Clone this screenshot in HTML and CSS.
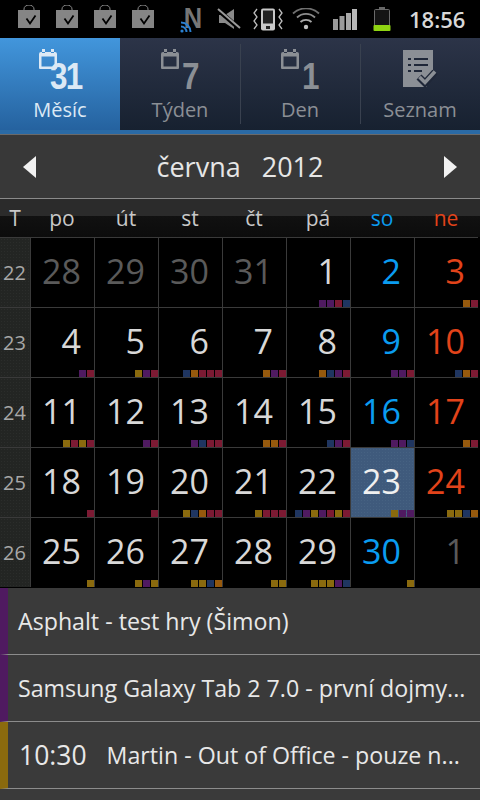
FILE: index.html
```html
<!DOCTYPE html>
<html lang="cs">
<head>
<meta charset="utf-8">
<title>Kalendář</title>
<link rel="stylesheet" href="styles.css">
</head>
<body>
<div class="app">
  <header class="status">
    <svg class="bag" viewBox="0 0 22 23"><path d="M6 6V4a5 4 0 0 1 10 0v2" fill="none" stroke="#8a8a8a" stroke-width="1"/><rect y="5" width="22" height="18" fill="#858585"/><path d="M8.500 13.500l3.500 5 5.500-8" fill="none" stroke="#000" stroke-width="1.800"/></svg>
    <svg class="bag" viewBox="0 0 22 23"><path d="M6 6V4a5 4 0 0 1 10 0v2" fill="none" stroke="#8a8a8a" stroke-width="1"/><rect y="5" width="22" height="18" fill="#858585"/><path d="M8.500 13.500l3.500 5 5.500-8" fill="none" stroke="#000" stroke-width="1.800"/></svg>
    <svg class="bag" viewBox="0 0 22 23"><path d="M6 6V4a5 4 0 0 1 10 0v2" fill="none" stroke="#8a8a8a" stroke-width="1"/><rect y="5" width="22" height="18" fill="#858585"/><path d="M8.500 13.500l3.500 5 5.500-8" fill="none" stroke="#000" stroke-width="1.800"/></svg>
    <svg class="bag" viewBox="0 0 22 23"><path d="M6 6V4a5 4 0 0 1 10 0v2" fill="none" stroke="#8a8a8a" stroke-width="1"/><rect y="5" width="22" height="18" fill="#858585"/><path d="M8.500 13.500l3.500 5 5.500-8" fill="none" stroke="#000" stroke-width="1.800"/></svg>
    <div class="nfc">
      <span class="nfc-letter">N</span>
      <svg class="nfc-waves" viewBox="0 0 12 12"><circle cx="2" cy="10" r="1.600" fill="#2a7fd0"/><path d="M1 5.500a5.500 5.500 0 0 1 5.500 5.500M1 1.500a9.500 9.500 0 0 1 9.500 9.500" fill="none" stroke="#2a7fd0" stroke-width="2"/></svg>
    </div>
    <svg class="mute" viewBox="0 0 24 24"><path d="M2 8h6l9-6v20l-9-6H2z" fill="#8a8a8a"/><path d="M1 3l22 19" stroke="#000" stroke-width="4.500"/><path d="M1 2l22 19" stroke="#9a9a9a" stroke-width="2"/></svg>
    <svg class="vibrate" viewBox="0 0 30 23"><rect x="8" y="0.500" width="14" height="22" rx="2" fill="#c8c8c8"/><rect x="10" y="2.500" width="10" height="13" fill="#222"/><rect x="13" y="18" width="4" height="3" fill="#222"/><path d="M4 1L1 5l3 4-3 4 3 4-3 4M26 1l3 4-3 4 3 4-3 4 3 4" fill="none" stroke="#bdbdbd" stroke-width="1.300"/></svg>
    <svg class="wifi" viewBox="0 0 28 22"><circle cx="14" cy="19" r="2.200" fill="#c0c0c0"/><path d="M8.500 14a8 8 0 0 1 11 0" fill="none" stroke="#a8a8a8" stroke-width="1.800"/><path d="M5 9.500a13 13 0 0 1 18 0" fill="none" stroke="#8c8c8c" stroke-width="1.800"/><path d="M1 5.500a19 19 0 0 1 26 0" fill="none" stroke="#707070" stroke-width="1.800"/></svg>
    <svg class="signal" viewBox="0 0 24 21"><path d="M0 10h5v11H0z" fill="#9a9a9a"/><path d="M6.500 7h5v14h-5z" fill="#9a9a9a"/><path d="M13 4h5v17h-5z" fill="#a8a8a8"/><path d="M19 0h5v21h-5z" fill="#b8b8b8"/></svg>
    <svg class="battery" viewBox="0 0 18 24"><rect x="6" y="0" width="6" height="2.500" fill="#666"/><rect x="1.500" y="2.500" width="15" height="20" rx="1" fill="#141414" stroke="#6a6a6a"/><rect x="0.500" y="18" width="17" height="6" rx="1" fill="#8fd412"/></svg>
    <span class="clock">18:56</span>
  </header>

  <nav class="tabs">
    <div class="tab tab-active">
      <div class="tab-icon">
        <svg class="cal" viewBox="0 0 18 20"><path d="M2 3h14a2 2 0 0 1 2 2v14a1 1 0 0 1-1 1H1a1 1 0 0 1-1-1V5a2 2 0 0 1 2-2zM2.500 7.500v10h13v-10zM3 0h3v4H3zM12 0h3v4h-3z" fill="currentColor" fill-rule="evenodd"/></svg>
        <span class="tab-num tab-num-month">31</span>
      </div>
      <span class="tab-label">Měsíc</span>
    </div>
    <div class="tab">
      <div class="tab-icon">
        <svg class="cal" viewBox="0 0 18 20"><path d="M2 3h14a2 2 0 0 1 2 2v14a1 1 0 0 1-1 1H1a1 1 0 0 1-1-1V5a2 2 0 0 1 2-2zM2.500 7.500v10h13v-10zM3 0h3v4H3zM12 0h3v4h-3z" fill="currentColor" fill-rule="evenodd"/></svg>
        <span class="tab-num">7</span>
      </div>
      <span class="tab-label">Týden</span>
    </div>
    <div class="tab tab-rule">
      <div class="tab-icon">
        <svg class="cal" viewBox="0 0 18 20"><path d="M2 3h14a2 2 0 0 1 2 2v14a1 1 0 0 1-1 1H1a1 1 0 0 1-1-1V5a2 2 0 0 1 2-2zM2.500 7.500v10h13v-10zM3 0h3v4H3zM12 0h3v4h-3z" fill="currentColor" fill-rule="evenodd"/></svg>
        <span class="tab-num">1</span>
      </div>
      <span class="tab-label">Den</span>
    </div>
    <div class="tab tab-rule">
      <div class="tab-icon">
        <svg class="doc" viewBox="0 0 36 38"><path d="M1 0h30v22l-10 8 4 7H1z" fill="currentColor"/><path d="M6 8h3v2H6zM12 8h14v2H12zM6 14h3v2H6zM12 14h14v2H12zM6 20h3v2H6zM12 20h8v2h-8z" fill="#1f2738"/><path d="M17 27l6 6 10-11" fill="none" stroke="#1f2738" stroke-width="7"/><path d="M17.500 27l5.500 5.500 10-11" fill="none" stroke="currentColor" stroke-width="3.600"/></svg>
      </div>
      <span class="tab-label">Seznam</span>
    </div>
  </nav>

  <section class="month-bar">
    <span class="arrow arrow-left"></span>
    <span class="month-title"><span>června</span><span>2012</span></span>
    <span class="arrow arrow-right"></span>
  </section>

  <div class="weekdays">
    <span class="wd-t">T</span>
    <span>po</span><span>út</span><span>st</span><span>čt</span><span>pá</span>
    <span class="sat">so</span><span class="sun">ne</span>
  </div>

  <main class="grid">
    <div class="wk">22</div>
    <div class="day dim"><b>28</b><i class="marks"></i></div>
    <div class="day dim"><b>29</b><i class="marks"></i></div>
    <div class="day dim"><b>30</b><i class="marks"></i></div>
    <div class="day dim"><b>31</b><i class="marks"></i></div>
    <div class="day"><b>1</b><i class="marks"><u class="p"></u><u class="p"></u><u class="m"></u><u class="n"></u></i></div>
    <div class="day sat"><b>2</b><i class="marks"></i></div>
    <div class="day sun"><b>3</b><i class="marks"><u class="o"></u><u class="m"></u></i></div>

    <div class="wk">23</div>
    <div class="day"><b>4</b><i class="marks"><u class="p"></u><u class="m"></u></i></div>
    <div class="day"><b>5</b><i class="marks"><u class="g"></u><u class="p"></u><u class="m"></u></i></div>
    <div class="day"><b>6</b><i class="marks"><u class="n"></u><u class="o"></u><u class="m"></u><u class="m"></u><u class="m"></u></i></div>
    <div class="day"><b>7</b><i class="marks"><u class="o"></u><u class="p"></u><u class="m"></u></i></div>
    <div class="day"><b>8</b><i class="marks"><u class="o"></u><u class="n"></u><u class="p"></u><u class="m"></u></i></div>
    <div class="day sat"><b>9</b><i class="marks"><u class="p"></u><u class="p"></u><u class="m"></u></i></div>
    <div class="day sun"><b>10</b><i class="marks"><u class="n"></u><u class="o"></u><u class="m"></u></i></div>

    <div class="wk">24</div>
    <div class="day"><b>11</b><i class="marks"><u class="g"></u><u class="m"></u><u class="g"></u><u class="m"></u></i></div>
    <div class="day"><b>12</b><i class="marks"><u class="p"></u><u class="m"></u></i></div>
    <div class="day"><b>13</b><i class="marks"><u class="p"></u><u class="n"></u><u class="m"></u><u class="m"></u></i></div>
    <div class="day"><b>14</b><i class="marks"><u class="o"></u><u class="o"></u><u class="m"></u></i></div>
    <div class="day"><b>15</b><i class="marks"><u class="n"></u><u class="p"></u><u class="m"></u></i></div>
    <div class="day sat"><b>16</b><i class="marks"><u class="p"></u><u class="p"></u><u class="n"></u></i></div>
    <div class="day sun"><b>17</b><i class="marks"><u class="o"></u><u class="m"></u></i></div>

    <div class="wk">25</div>
    <div class="day"><b>18</b><i class="marks"><u class="m"></u></i></div>
    <div class="day"><b>19</b><i class="marks"><u class="m"></u></i></div>
    <div class="day"><b>20</b><i class="marks"><u class="g"></u><u class="n"></u><u class="o"></u><u class="m"></u><u class="m"></u></i></div>
    <div class="day"><b>21</b><i class="marks"><u class="g"></u><u class="m"></u><u class="m"></u><u class="m"></u></i></div>
    <div class="day"><b>22</b><i class="marks"><u class="n"></u><u class="p"></u><u class="g"></u><u class="p"></u><u class="m"></u><u class="g"></u><u class="m"></u></i></div>
    <div class="day today"><b>23</b><i class="marks"><u class="g"></u><u class="p"></u><u class="p"></u></i></div>
    <div class="day sun"><b>24</b><i class="marks"><u class="g"></u><u class="g"></u><u class="n"></u><u class="o"></u></i></div>

    <div class="wk">26</div>
    <div class="day"><b>25</b><i class="marks"><u class="g"></u></i></div>
    <div class="day"><b>26</b><i class="marks"><u class="g"></u><u class="p"></u><u class="g"></u></i></div>
    <div class="day"><b>27</b><i class="marks"><u class="g"></u><u class="g"></u><u class="n"></u><u class="o"></u></i></div>
    <div class="day"><b>28</b><i class="marks"><u class="g"></u><u class="g"></u></i></div>
    <div class="day"><b>29</b><i class="marks"><u class="g"></u><u class="g"></u><u class="g"></u><u class="p"></u><u class="n"></u></i></div>
    <div class="day sat"><b>30</b><i class="marks"><u class="g"></u></i></div>
    <div class="day dim"><b>1</b><i class="marks"></i></div>
  </main>

  <ul class="events">
    <li class="event ev-purple"><span class="ev-title">Asphalt - test hry (Šimon)</span></li>
    <li class="event ev-purple"><span class="ev-title">Samsung Galaxy Tab 2 7.0 - první dojmy...</span></li>
    <li class="event ev-gold"><span class="ev-time">10:30</span><span class="ev-title">Martin - Out of Office - pouze n...</span></li>
  </ul>
</div>
</body>
</html>
```

FILE: styles.css
```css
* { box-sizing: border-box; }
html, body { margin: 0; padding: 0; background: #3a3a3a; }
.app {
  width: 480px;
  height: 800px;
  overflow: hidden;
  display: flex;
  flex-direction: column;
  font-family: "Open Sans", "Noto Sans", sans-serif;
  color: #dcdcdc;
}

/* status bar */
.status {
  height: 38px;
  flex: none;
  background: #000;
  display: flex;
  align-items: flex-start;
  padding-left: 18px;
}
.status svg { display: block; flex: none; }
.bag { width: 22px; height: 23px; margin: 5px 16px 0 0; }
.nfc { position: relative; width: 24px; height: 32px; margin-left: 10px; }
.nfc-letter {
  position: absolute;
  left: 2px;
  top: 0;
  font: bold 30px/36px "Liberation Sans", sans-serif;
  color: #767676;
  transform: scaleX(0.85);
}
.nfc-waves { position: absolute; left: 0; top: 21px; width: 12px; height: 12px; }
.mute { width: 24px; height: 24px; margin: 7px 0 0 13px; }
.vibrate { width: 30px; height: 23px; margin: 8px 0 0 12px; }
.wifi { width: 28px; height: 22px; margin: 8px 0 0 9px; }
.signal { width: 24px; height: 21px; margin: 9px 0 0 13px; }
.battery { width: 18px; height: 24px; margin: 7px 0 0 16px; }
.clock {
  margin-left: 18px;
  font-size: 22px;
  line-height: 38px;
  font-weight: 600;
  color: #d8d8d8;
}

/* tabs */
.tabs {
  height: 96px;
  flex: none;
  display: grid;
  grid-template-columns: repeat(4, 120px);
  background: #2a6aa5;
  padding-bottom: 4px;
}
.tab {
  position: relative;
  display: flex;
  flex-direction: column;
  align-items: center;
  background: linear-gradient(#2c3448, #172130);
  color: #8b8f95;
  padding-top: 11px;
}
.tab-active {
  background: linear-gradient(#4296dc, #25629f);
  color: #dce9f5;
}
.tab-rule::before {
  content: "";
  position: absolute;
  left: 0;
  top: 6px;
  bottom: 6px;
  width: 1px;
  background: #39414f;
}
.tab-icon { display: flex; align-items: flex-start; height: 38px; }
.cal { width: 18px; height: 20px; display: block; }
.doc { width: 36px; height: 38px; display: block; margin-top: 1px; }
.tab-num {
  font: bold 37px/38px "Liberation Sans", sans-serif;
  margin: 9px 0 0 3px;
  width: 18px;
  transform: scaleX(0.85);
  transform-origin: left center;
}
.tab-num-month { margin-left: -7px; width: 32px; letter-spacing: -2px; }
.tab-label { font-size: 20px; line-height: 28px; margin-top: 9px; }

/* month bar */
.month-bar {
  height: 65px;
  flex: none;
  display: flex;
  align-items: center;
  justify-content: space-between;
  padding: 0 23px;
  background: #383838;
  border-top: 1px solid #6a6a6a;
  border-bottom: 1px solid #8a8a8a;
}
.arrow { width: 0; height: 0; border-style: solid; border-width: 11px 0; border-color: transparent; }
.arrow-left { border-right: 13px solid #f2f2f2; }
.arrow-right { border-left: 13px solid #f2f2f2; }
.month-title { display: flex; gap: 21px; font-size: 27px; line-height: 34px; color: #e6e6e6; }

/* week days */
.weekdays {
  height: 38px;
  flex: none;
  display: grid;
  grid-template-columns: 30px repeat(7, 64px);
  align-items: center;
  text-align: center;
  font-size: 21px;
  line-height: 38px;
  color: #c8c8c8;
  background: linear-gradient(#2b2b2b 0, #2b2b2b 17px, #111 17px, #0c0c0c 100%);
}
.wd-t { text-align: center; }
.weekdays .sat { color: #0a9cf0; }
.weekdays .sun { color: #e2431a; }

/* grid */
.grid {
  flex: none;
  display: grid;
  grid-template-columns: 30px repeat(7, 64px);
  grid-auto-rows: 70px;
  background: #000;
  height: 351px;
  border-bottom: 1px solid #000;
}
.wk {
  border-top: 1px solid #3a3a3a;
  background-color: #232523;
  background-image: radial-gradient(#2b2d2b 0.600px, transparent 0.700px);
  background-size: 3px 3px;
  color: #a8a8a8;
  font-size: 20px;
  line-height: 70px;
  text-align: center;
  padding-right: 1px;
}
.day {
  display: flex;
  flex-direction: column;
  border-top: 1px solid #3a3a3a;
  border-left: 1px solid #3a3a3a;
  color: #d8d8d8;
  background: #000;
}
.day b {
  flex: 1;
  min-height: 0;
  font-weight: 400;
  font-size: 34px;
  line-height: 66px;
  text-align: right;
  padding-right: 13px;
}
.marks { flex: none; display: flex; justify-content: flex-end; gap: 1px; height: 7px; }
.marks u { display: block; width: 7px; height: 7px; }
.p { background: #4f1a60; }
.m { background: #7c1a33; }
.n { background: #1f3560; }
.o { background: #96590d; }
.g { background: #8a6a0e; }
.day.dim { color: #5a5a5a; }
.day.sat { color: #0a9cf0; }
.day.sun { color: #e2431a; }
.today {
  color: #f0f0f0;
  background-color: #3f5a7c;
  background-image: radial-gradient(#466282 0.600px, transparent 0.700px);
  background-size: 3px 3px;
}

/* events */
.events { list-style: none; margin: 0; padding: 0; flex: 1; background: #3a3a3a; }
.event {
  height: 67px;
  display: flex;
  align-items: center;
  border-bottom: 1px solid #8c8c8c;
  border-left: 8px solid #4f1a60;
  padding-left: 10px;
  white-space: nowrap;
  color: #e8e8e8;
}
.ev-gold { border-left-color: #8a6a0e; }
.ev-title { font-size: 23.200px; }
.ev-time { font-size: 26.500px; margin: 0 20px 0 1px; }
```
